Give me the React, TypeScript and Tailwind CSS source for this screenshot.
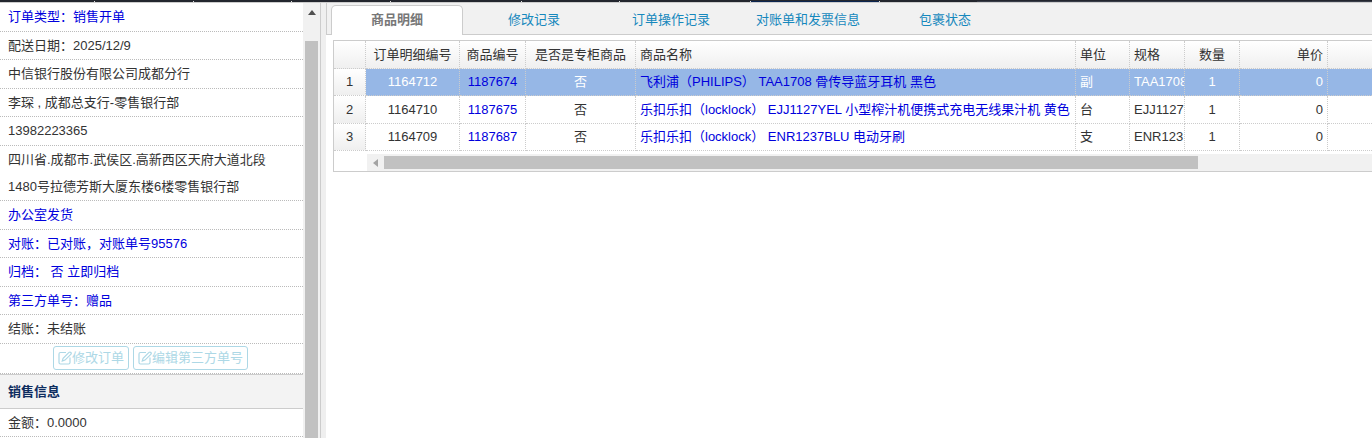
import { ReactNode } from 'react';

type Info = { text: ReactNode; link?: boolean };

const orderInfo: Info[] = [
  { text: '订单类型：销售开单', link: true },
  { text: '配送日期：2025/12/9' },
  { text: '中信银行股份有限公司成都分行' },
  { text: '李琛 , 成都总支行-零售银行部' },
  { text: '13982223365' },
  { text: '四川省.成都市.武侯区.高新西区天府大道北段1480号拉德芳斯大厦东楼6楼零售银行部' },
  { text: '办公室发货', link: true },
  { text: '对账：已对账，对账单号95576', link: true },
  {
    text: (
      <>
        归档： 否 <a href="#archive">立即归档</a>
      </>
    ),
    link: true,
  },
  { text: '第三方单号：赠品', link: true },
  { text: '结账：未结账' },
];

const tabs = [
  { name: '商品明细', active: true },
  { name: '修改记录' },
  { name: '订单操作记录' },
  { name: '对账单和发票信息' },
  { name: '包裹状态' },
];

const rows = [
  { id: '1164712', sku: '1187674', counter: '否', name: '飞利浦（PHILIPS） TAA1708 骨传导蓝牙耳机 黑色', unit: '副', spec: 'TAA1708', qty: 1, price: 0, selected: true },
  { id: '1164710', sku: '1187675', counter: '否', name: '乐扣乐扣（locklock） EJJ1127YEL 小型榨汁机便携式充电无线果汁机 黄色', unit: '台', spec: 'EJJ1127', qty: 1, price: 0 },
  { id: '1164709', sku: '1187687', counter: '否', name: '乐扣乐扣（locklock） ENR1237BLU 电动牙刷', unit: '支', spec: 'ENR123', qty: 1, price: 0 },
];

const cell = 'overflow-hidden whitespace-nowrap border-r border-b border-dotted border-[#ccc] px-1 font-normal';

function EditIcon() {
  return (
    <svg viewBox="0 0 14 14" className="size-3.5" fill="none" stroke="currentColor">
      <path d="M8 1.500H2.500Q1 1.500 1 3V11.500Q1 13 2.500 13H10.500Q12 13 12 11.500V6.500" strokeWidth="1.200" />
      <path d="M4.300 10 5.100 7.200 11 1.400Q12 .6 12.900 1.500 13.700 2.400 12.800 3.300L7 9.100Z" strokeWidth="1.200" />
    </svg>
  );
}

function ActionButton({ children }: { children: ReactNode }) {
  return (
    <button type="button" className="flex h-6 items-center rounded-[3px] border border-[#add8e6] px-1 text-[#add8e6]">
      <EditIcon />
      {children}
    </button>
  );
}

function Sidebar() {
  return (
    <aside className="flex w-[326px] shrink-0 bg-white">
      <div className="min-w-0 flex-1">
        <ul>
          {orderInfo.map((item, i) => (
            <li
              key={i}
              className={`min-h-7 border-b border-dotted border-[#bbb] pr-6 pl-2 leading-[27px] odd:min-h-[29px] ${item.link ? 'text-[#0000dd]' : ''}`}
            >
              {item.text}
            </li>
          ))}
        </ul>
        <div className="flex h-[30px] items-start justify-center gap-1 border-b border-dotted border-[#bbb] pt-0.5 pr-0.5">
          <ActionButton>修改订单</ActionButton>
          <ActionButton>编辑第三方单号</ActionButton>
        </div>
        <h2 className="h-[35px] border-y border-[#ccc] bg-[#f3f3f3] px-2 leading-[33px] font-bold text-[#0e2d5f]">销售信息</h2>
        <p className="h-7 border-b border-dotted border-[#bbb] px-2 leading-[27px]">金额：0.0000</p>
      </div>

      {/* Vertical scrollbar */}
      <div className="flex w-[17px] flex-col items-center bg-[#f1f1f1]">
        <svg viewBox="0 0 8 5" className="mt-[7px] h-[5px] w-2">
          <path d="M0 5 4 0 8 5Z" fill="#505050" />
        </svg>
        <div className="mt-[26px] w-[13px] flex-1 bg-[#c1c1c1]" />
      </div>

      {/* Splitter */}
      <div className="w-1.5 border-l border-[#ccc] bg-[#efefef]" />
    </aside>
  );
}

function TabBar() {
  return (
    <nav className="flex h-8 gap-[5px] border-b border-l border-[#ccc] bg-[#f1f1f1] pl-1">
      {tabs.map((tab) => (
        <button
          key={tab.name}
          type="button"
          className={
            tab.active
              ? 'mt-0.5 -mb-px w-[132px] rounded-t-[5px] border border-b-0 border-[#ccc] bg-white pb-0.5 font-bold text-[#777]'
              : 'w-[132px] pt-0.5 text-[#1688bd]'
          }
        >
          {tab.name}
        </button>
      ))}
    </nav>
  );
}

function ProductGrid() {
  return (
    <div className="mt-[5px] ml-[7px] overflow-hidden border border-r-0 border-[#ccc]">
      <table className="w-full table-fixed border-separate border-spacing-0">
        <colgroup>
          <col className="w-8" />
          <col className="w-[94px]" />
          <col className="w-[66px]" />
          <col className="w-[110px]" />
          <col className="w-[440px]" />
          <col className="w-[54px]" />
          <col className="w-[55px]" />
          <col className="w-[55px]" />
          <col className="w-[88px]" />
          <col />
        </colgroup>
        <thead>
          <tr className="h-7 bg-linear-to-b from-white to-[#efefef]">
            <th className={cell} />
            <th className={cell}>订单明细编号</th>
            <th className={cell}>商品编号</th>
            <th className={cell}>是否是专柜商品</th>
            <th className={`${cell} text-left`}>商品名称</th>
            <th className={`${cell} text-left`}>单位</th>
            <th className={`${cell} text-left`}>规格</th>
            <th className={cell}>数量</th>
            <th className={`${cell} text-right`}>单价</th>
            <th className="border-b border-dotted border-[#ccc]" />
          </tr>
        </thead>
        <tbody className="text-center">
          {rows.map((row, i) => (
            <tr key={row.id} className={`h-[27px] even:h-7 ${row.selected ? 'bg-[#96b7e6] text-white' : ''}`}>
              <td className={`${cell} bg-linear-to-b from-white to-[#efefef] text-[#333]`}>{i + 1}</td>
              <td className={cell}>{row.id}</td>
              <td className={cell}>
                <a href={`#sku-${row.sku}`} className="text-[#0000dd]">{row.sku}</a>
              </td>
              <td className={cell}>{row.counter}</td>
              <td className={`${cell} text-left`}>
                <a href={`#product-${row.sku}`} className="text-[#0000dd]">{row.name}</a>
              </td>
              <td className={`${cell} text-left`}>{row.unit}</td>
              <td className="overflow-hidden border-r border-b border-dotted border-[#ccc] pl-1 text-left whitespace-nowrap">
                <div className="overflow-hidden">{row.spec}</div>
              </td>
              <td className={cell}>{row.qty}</td>
              <td className={`${cell} text-right`}>{row.price}</td>
              <td className="border-b border-dotted border-[#ccc]" />
            </tr>
          ))}
        </tbody>
      </table>

      {/* Horizontal scrollbar */}
      <div className="mt-[3px] ml-[33px] flex h-[17px] items-center bg-[#f1f1f1]">
        <svg viewBox="0 0 5 8" className="ml-1.5 h-2 w-[5px]">
          <path d="M5 0 0 4 5 8Z" fill="#a3a3a3" />
        </svg>
        <div className="ml-1.5 h-[13px] w-[81%] bg-[#c1c1c1]" />
      </div>
    </div>
  );
}

export default function App() {
  return (
    <div className="flex h-screen flex-col overflow-hidden bg-white font-['Liberation_Sans','Noto_Sans_CJK_SC',sans-serif] text-[13px] leading-5 text-[#333]">
      {/* Lower edge of the top menu */}
      <div className="flex h-0.5 shrink-0 gap-px border-t border-[#23262e] bg-[#ddd]">
        <div className="w-[94px] bg-[#23262e]" />
        <div className="w-[98px] bg-[#23262e]" />
        <div className="w-[97px] bg-[#23262e]" />
        <div className="w-[98px] bg-[#23262e]" />
        <div className="w-[130px] bg-[#23262e]" />
        <div className="w-[97px] bg-[#23262e]" />
        <div className="w-[130px] bg-[#23262e]" />
        <div className="w-[128px] bg-[#0c2550]" />
        <div className="w-[97px] bg-[#23262e]" />
        <div className="-ml-px flex-1 bg-[#393d49]" />
      </div>
      <div className="flex min-h-0 flex-1 border-t border-[#ccc]">
        <Sidebar />
        <main className="min-w-0 flex-1">
          <TabBar />
          <ProductGrid />
        </main>
      </div>
    </div>
  );
}
